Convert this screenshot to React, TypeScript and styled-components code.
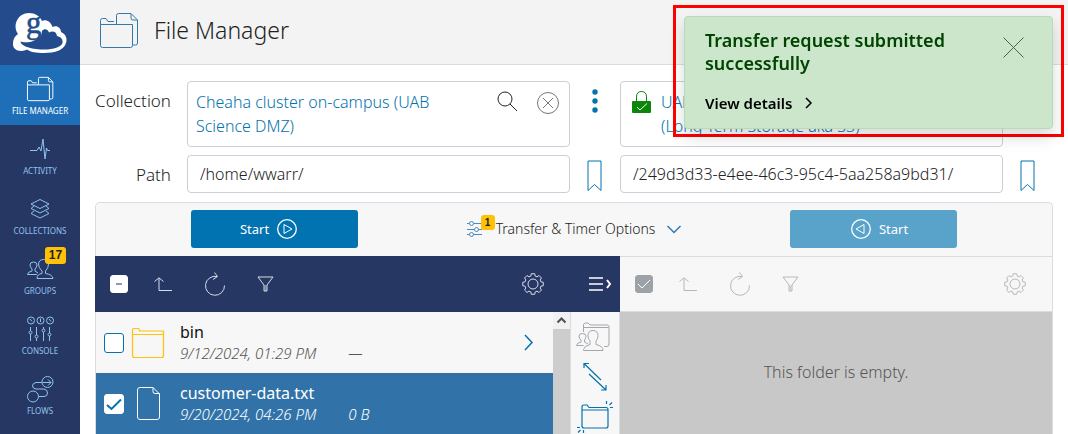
import React, { ReactNode } from "react";
import styled, { createGlobalStyle, css } from "styled-components";

const color = {
  navy: "#273763",
  link: "#0473ac",
  select: "#3173a9",
  line: "#d8dde3",
  field: "#cacfd8",
  panel: "#f7f7f7",
  amber: "#ffc107",
  muted: "#b4b8bc",
};

const GlobalStyle = createGlobalStyle`
  * { box-sizing: border-box; }
  body { margin: 0; background: #fff; color: #222; font: 300 16px/24px "Noto Sans", sans-serif; }
  button, input { font: inherit; color: inherit; }
  button { border: 0; background: none; padding: 0; cursor: pointer; }
  svg { display: block; flex: none; overflow: visible; }
  h1, h2, p, ul { margin: 0; padding: 0; }
  ul { list-style: none; }
  a { text-decoration: none; }
`;

/* ---------- icons ---------- */

type IconProps = { w: number; h: number; children: ReactNode; weight?: number };
const Icon = ({ w, h, children, weight = 1 }: IconProps) => (
  <svg width={w} height={h} viewBox={`0 0 ${w} ${h}`} fill="none" stroke="currentColor" strokeWidth={weight} aria-hidden="true">
    {children}
  </svg>
);

const Logo = () => (
  <svg width="56" height="42" viewBox="12 11 56 42" aria-hidden="true">
    <path fill="#fff" d="M13 42C13 38 15 35 18 33C12 24 18 12 29 12C35 12 40 15 42 20C46 18 51 21 52.500 26C57 24 61 27 61 31C66 33 67.500 38 66 42C64 49 55 52 44 52C36 52 30 51 27 48.500C20 52 12 49 13 42Z" />
    <path fill="#244c8c" d="M20.500 40.500C24 42 32 41.500 36 38.500C40 37 42 34 42 30C44 27 48 28 49 31.500C52 29.500 56.500 30 57 35C61 36 63 38 62.500 42C61 46 54 48.500 44 48.500C34 48.500 21 46 20.500 40.500Z" />
    <text x="26" y="32" fontFamily="Liberation Serif, serif" fontWeight="400" fontSize="31" fill="#244c8c" stroke="#244c8c" strokeWidth=".6">g</text>
  </svg>
);

const Folders = ({ large }: { large?: boolean }) => (
  <svg width={large ? 39 : 27} height={large ? 35 : 24} viewBox="0 0 39 35" fill="none" stroke="currentColor" strokeWidth={large ? 1 : 1.4} aria-hidden="true">
    <path d="M.5 11.500V7.500Q.5 5.500 2.500 5.500H6L8 8.500H14M.5 11.500H32.500V32.500Q32.500 34.500 30.500 34.500H2.500Q.5 34.500.5 32.500ZM16.500 11V2.500Q16.500.5 18.500.5H31L37.500 7V30Q37.500 32 35.500 32H33M31 1V5Q31 7 33 7H37" />
  </svg>
);

const Pulse = () => (
  <Icon w={20} h={22}><path d="M0 12.500H7L9 9L11 13L13 1L15 21L16.500 10L17.500 12.500H20" /></Icon>
);
const Layers = () => (
  <Icon w={20} h={22}>
    <path d="M1 6L10 1.500L19 6L10 10.500ZM4 8L1 10.500L10 15L19 10.500L16 8M4 13L1 15.500L10 20L19 15.500L16 13" />
  </Icon>
);
const People = () => (
  <Icon w={27} h={20}>
    <path d="M10 19.500Q10 15 15 14.500V12Q11.500 9 11.500 5Q12 .5 16.500 .5Q21 .5 21.500 5Q21.500 9 18.500 12V14.500Q25.500 15.500 26 19.500ZM10 15.500H.5Q.5 13 5 12V10Q3 8 3 6Q3 3 6.500 3Q10 3 10 6Q10 8 8 10V12L11 14" />
  </Icon>
);
const Console = () => (
  <Icon w={27} h={26}>
    <circle cx="4" cy="4.500" r="3.500" /><circle cx="13.500" cy="4.500" r="3.500" /><circle cx="23" cy="4.500" r="3.500" />
    <path d="M3 3L5 5.500M13.500 2.500V6M22 3L24 5.500M3.500 11V15M3.500 18V25M9.500 11V19M9.500 22V25M16.500 11V13M16.500 16V25M22.500 11V17M22.500 20V25" />
    <circle cx="3.500" cy="16.500" r="1.500" /><circle cx="9.500" cy="20.500" r="1.500" /><circle cx="16.500" cy="14.500" r="1.500" /><circle cx="22.500" cy="18.500" r="1.500" />
  </Icon>
);
const Flow = () => (
  <Icon w={27} h={27}>
    <circle cx="20.500" cy="6" r="5.500" /><circle cx="6" cy="20.500" r="5.500" />
    <path d="M15 6.500H9Q5.500 7 5.500 10Q5.500 12.500 9 13H17Q20.500 13.500 20.500 17Q20.500 20.500 17 20.500H11.500M16 6.500H24M21 3.500L24 6.500L21 9.500" />
  </Icon>
);
const Magnifier = () => (
  <Icon w={21} h={21}><circle cx="8" cy="8" r="7" /><path d="M13 13L20 20" /></Icon>
);
const CircledX = () => (
  <Icon w={22} h={22}><circle cx="11" cy="11" r="10.500" /><path d="M6 6L16 16M16 6L6 16" /></Icon>
);
const Kebab = () => (
  <svg width="6" height="24" viewBox="0 0 6 24" fill="currentColor" aria-hidden="true">
    <circle cx="3" cy="3" r="2.700" /><circle cx="3" cy="12" r="2.700" /><circle cx="3" cy="21" r="2.700" />
  </svg>
);
const Lock = () => (
  <svg width="19" height="22" viewBox="0 0 19 22" fill="none" aria-hidden="true">
    <path d="M4.500 11V6Q4.500.5 9.500.5Q14.500.5 14.500 6V11" stroke="#0a860a" />
    <rect y="10" width="19" height="12" rx="1" fill="#0a860a" />
    <path d="M5 16L8 19L15 12.500" stroke="#fff" />
  </svg>
);
const Bookmark = () => (
  <Icon w={15} h={32}><path d="M1 1H14V30.500L7.500 24.500L1 30.500Z" /></Icon>
);
const Sliders = () => (
  <Icon w={15} h={16}>
    <path d="M0 2.500H2.500M6.500 2.500H15M0 8.500H7.500M11.500 8.500H15M0 13.500H2.500M6.500 13.500H15" />
    <circle cx="4.500" cy="2.500" r="2" /><circle cx="9.500" cy="8.500" r="2" /><circle cx="4.500" cy="13.500" r="2" />
  </Icon>
);
const Play = ({ back }: { back?: boolean }) => (
  <Icon w={20} h={20}>
    <circle cx="10" cy="10" r="9.300" strokeWidth="1.300" />
    <path d={back ? "M13 5.500V14.500L5 10Z" : "M7 5.500V14.500L15 10Z"} />
  </Icon>
);
const UpLevel = () => (
  <Icon w={18} h={15}><path d="M.5 4.500L5 .8L9.500 4.500M5 1V13.500H18" /></Icon>
);
const Reload = () => (
  <Icon w={20} h={24}><path d="M19.500 13.500A9.500 9.500 0 1 1 12 4.500M9.500 .5L12.500 4.500L8 7.500" /></Icon>
);
const Funnel = () => (
  <Icon w={17} h={16}>
    <path d="M1 1H16L10 9V15H7V9Z" /><path d="M7.500 9H9.500V15H7.500Z" fill="currentColor" strokeWidth="0" opacity=".5" />
  </Icon>
);
const gearPath = (() => {
  const pts: string[] = [];
  for (let i = 0; i < 8; i++) {
    const a = (i * Math.PI) / 4;
    [[-0.27, 8.2], [-0.17, 10.4], [0.17, 10.4], [0.27, 8.2]].forEach(([d, r]) =>
      pts.push(`${(11 + r * Math.sin(a + d)).toFixed(2)} ${(11 - r * Math.cos(a + d)).toFixed(2)}`)
    );
  }
  return `M${pts.join("L")}Z`;
})();
const Gear = () => (
  <Icon w={22} h={22}><path d={gearPath} strokeLinejoin="round" /><circle cx="11" cy="11" r="5" /></Icon>
);
const PaneMenu = () => (
  <Icon w={23} h={16} weight={2}>
    <path d="M0 2H14M0 8H14M0 14H14" strokeWidth="1.500" /><path d="M18 4L21 8L18 12" />
  </Icon>
);
const Folder = () => (
  <Icon w={32} h={30}>
    <path d="M.5 27.500V2.500Q.5.500 2.500.500H6Q7.500.500 7.500 3H31.500V27.500Q31.500 29.500 29.500 29.500H2.500Q.5 29.500.5 27.500ZM1 6.500H31" strokeWidth="1.200" />
  </Icon>
);
const Page = () => (
  <Icon w={23} h={33}>
    <path d="M3 .5H16L22.500 7V30Q22.500 32.500 20 32.500H3Q.5 32.500.5 30V3Q.5.5 3 .5ZM16 .5V4.500Q16 6.500 18 6.500H22.500" />
  </Icon>
);
const Chevron = () => <Icon w={9} h={17} weight={1.5}><path d="M1 1L8 8.500L1 16" /></Icon>;
const SharedFolder = () => (
  <Icon w={38} h={31}>
    <path d="M7.500 10V3Q7.500 1 9.500 1H12L14 3H31Q33 3 33 5V22Q33 24.500 31 24.500H28M8 5.500H32.500M7.500 27.500Q8 24 14 22.500V19Q12 17 12 13.500Q12 8.500 17 8.500Q22 8.500 22 13.500Q22 17 20 19V22.500Q27 24 27 28.500H7.500ZM7.500 23.500H.5Q.5 21 5 20V18Q3 16.500 3 14Q3 11.500 6.500 11.500Q10 11.500 10 14Q10 16.500 8.500 18V20L12 22" />
  </Icon>
);
const Sync = () => (
  <Icon w={38} h={30} weight={1.2}>
    <path d="M8 1.500L25 18M8 6V1.500H13M13 12L30 28M25 28H30V23" />
  </Icon>
);
const NewFolder = () => (
  <Icon w={36} h={32} weight={1.2}>
    <path d="M5 26V6Q5 4 7 4H10L12 6.500H29Q31 6.500 31 8.500V25Q31 27 29 27H7Q5 27 5 25M5 9H31M29.500 0V3M32.500 4L35 1.500M33 6.500H36M0 26.500H3M1 31.500L3.500 29M6.500 29V32" />
  </Icon>
);

/* ---------- shell ---------- */

const Shell = styled.div`
  display: flex;
  height: 100vh;
  overflow: hidden;
`;
const Sidebar = styled.nav`
  flex: none;
  width: 80px;
  background: ${color.navy};
`;
const Brand = styled.a`
  display: flex;
  align-items: center;
  justify-content: center;
  height: 65px;
  background: #244c8c;
`;
const NavItem = styled.a<{ $active?: boolean }>`
  position: relative;
  display: flex;
  flex-direction: column;
  align-items: center;
  justify-content: space-between;
  height: 60px;
  padding: 8px 0;
  color: ${(p) => (p.$active ? "#fff" : "#8fc3ee")};
  background: ${(p) => (p.$active ? "#1f6fb8" : "transparent")};
  font: 400 8px/12px "Noto Sans", sans-serif;
  text-transform: uppercase;
`;
const NavIcon = styled.span`
  display: flex;
  align-items: center;
  height: 32px;
`;
const Badge = styled.span<{ $small?: boolean }>`
  position: absolute;
  border-radius: 3px;
  background: ${color.amber};
  color: #222;
  font-family: "Liberation Sans", sans-serif;
  font-weight: 700;
  text-align: center;
  ${(p) =>
    p.$small
      ? css`top: -6px; left: 14px; width: 14px; font-size: 10px; line-height: 15px;`
      : css`top: 2px; left: 45px; width: 21px; font-size: 12px; line-height: 17px;`}
`;
const Main = styled.main`
  flex: 1;
  min-width: 0;
  display: flex;
  flex-direction: column;
`;
const Header = styled.header`
  display: flex;
  align-items: center;
  gap: 15px;
  height: 65px;
  flex: none;
  padding: 0 20px 4px;
  background: #f3f3f3;
  border-bottom: 1px solid ${color.line};
  color: #3178ab;
`;
const Title = styled.h1`
  color: #222;
  font-size: 23px;
  line-height: 32px;
  font-weight: 300;
`;

/* ---------- endpoint form ---------- */

const Form = styled.div`
  display: grid;
  grid-template-columns: 92px minmax(0, 1fr) 50px minmax(0, 1fr) 50px;
  gap: 8px 0;
  padding: 16px 15px 9px;
`;
const Label = styled.label`
  padding: 8px 16px 0 0;
  font-size: 17px;
  text-align: right;
`;
const Field = styled.div`
  display: flex;
  align-items: flex-start;
  gap: 10px;
  height: 66px;
  padding: 8px 10px 8px 8px;
  border: 1px solid ${color.field};
  border-radius: 4px;
  background: #fff;
`;
const Collection = styled.button`
  flex: 1;
  text-align: left;
  color: ${color.link};
`;
const FieldButton = styled.button<{ $grey?: boolean }>`
  flex: none;
  padding-top: ${(p) => (p.$grey ? 2 : 1)}px;
  margin-left: ${(p) => (p.$grey ? 9 : 0)}px;
  color: ${(p) => (p.$grey ? "#777" : "#222")};
`;
const LockMark = styled.span`
  padding: 1px 0 0 3px;
`;
const PathInput = styled.input`
  width: 100%;
  min-width: 0;
  height: 38px;
  padding: 0 12px;
  border: 1px solid ${color.field};
  border-radius: 4px;
  background: #fff;
`;
const SideButton = styled.button`
  display: flex;
  justify-content: center;
  padding-top: 8px;
  color: ${color.link};
`;
const BookmarkButton = styled(SideButton)`
  padding: 5px 1px 0 0;
`;

/* ---------- transfer panel ---------- */

const Panel = styled.section`
  flex: 1;
  display: flex;
  flex-direction: column;
  margin: 0 15px;
  border: 1px solid ${color.line};
  border-bottom: 0;
  border-radius: 5px 5px 0 0;
  background: ${color.panel};
`;
const StartBar = styled.div`
  display: flex;
  align-items: center;
  justify-content: space-between;
  height: 53px;
  flex: none;
  padding: 0 95px 1px;
`;
const StartButton = styled.button<{ $dim?: boolean }>`
  display: flex;
  align-items: center;
  justify-content: center;
  gap: 8px;
  width: 167px;
  height: 38px;
  padding: ${(p) => (p.$dim ? "0 0 0 12px" : "0 12px 0 0")};
  border-radius: 3px;
  color: #fff;
  background: ${(p) => (p.$dim ? "#59a2ca" : "#0273b1")};
  font-size: 13px;
  font-weight: 400;
`;
const Options = styled.button`
  display: flex;
  align-items: center;
  gap: 12px;
  font-size: 14px;
  color: #222;
`;
const OptionsIcon = styled.span`
  position: relative;
  margin-right: 2px;
  color: #4c8bc0;
`;
const OptionsChevron = styled.span`
  color: #2f78b4;
`;
const Panes = styled.div`
  flex: 1;
  display: grid;
  grid-template-columns: 91px minmax(0, 1fr) 50px minmax(0, 1fr) 49px;
  grid-template-rows: 56px 1fr;
`;
const Toolbar = styled.div<{ $dark?: boolean }>`
  grid-column: span 2;
  display: flex;
  align-items: center;
  padding: 0 26px 0 15px;
  ${(p) =>
    p.$dark
      ? css`background: ${color.navy}; color: #d6dcea; margin-left: -1px;`
      : css`color: ${color.muted}; border: solid ${color.line}; border-width: 1px 0;`}
`;
const ToolButtons = styled.div`
  flex: 1;
  display: flex;
  align-items: center;
  margin-left: 12px;
`;
const Tool = styled.button`
  display: flex;
  justify-content: center;
  width: 50px;
  &:first-child { padding-right: 4px; }
`;
const MenuButton = styled.button`
  display: flex;
  align-items: center;
  justify-content: center;
  padding-left: 10px;
  background: ${color.navy};
  color: #fff;
`;
const CheckBox = styled.span<{ $size: number }>`
  position: relative;
  flex: none;
  width: ${(p) => p.$size}px;
  height: ${(p) => p.$size}px;
  & > svg { position: absolute; inset: 0; pointer-events: none; }
`;
const Tick = styled.input<{ $fill: string; $edge: string }>`
  appearance: none;
  display: block;
  width: 100%;
  height: 100%;
  margin: 0;
  border: 1px solid ${(p) => p.$edge};
  border-radius: 3px;
  background: ${(p) => p.$fill};
`;
const Listing = styled.div`
  grid-column: span 2;
  display: flex;
`;
const Files = styled.ul`
  flex: 1;
`;
const FileRow = styled.li<{ $selected?: boolean }>`
  display: flex;
  align-items: center;
  height: 61px;
  padding: 0 20px 0 8px;
  color: ${(p) => (p.$selected ? "#fff" : "#555")};
  background: ${(p) => (p.$selected ? color.select : "transparent")};
`;
const FileIcon = styled.span<{ $folder?: boolean }>`
  display: flex;
  justify-content: center;
  width: 48px;
  color: ${(p) => (p.$folder ? color.amber : "#fff")};
`;
const FileText = styled.div`
  flex: 1;
  padding-left: 8px;
`;
const FileName = styled.p<{ $selected?: boolean }>`
  color: ${(p) => (p.$selected ? "#fff" : "#111")};
  font-size: 16px;
  line-height: 20px;
  font-weight: 400;
`;
const FileMeta = styled.p`
  display: flex;
  gap: 32px;
  font-size: 15px;
  line-height: 22px;
  font-style: italic;
  font-weight: 300;
`;
const OpenButton = styled.button`
  color: ${color.link};
`;
const ScrollTrack = styled.div`
  width: 17px;
  background: #cdcdcd;
`;
const ScrollUp = styled.div`
  display: flex;
  align-items: center;
  justify-content: center;
  height: 17px;
  background: #f1f1f1;
  color: #505050;
`;
const Actions = styled.div`
  display: flex;
  flex-direction: column;
  align-items: center;
  gap: 9px;
  padding-top: 10px;
  border: solid ${color.line};
  border-width: 0 1px;
  color: ${color.link};
`;
const Action = styled.button`
  &:disabled { color: #a3a8ad; }
`;
const Empty = styled.div`
  grid-column: span 2;
  padding-top: 48px;
  background: #c8c8c8;
  color: #555;
  text-align: center;
`;

/* ---------- toast ---------- */

const Frame = styled.div`
  position: fixed;
  top: 5px;
  right: 4px;
  width: 391px;
  padding: 8px 8px 5px;
  border: 3px solid #f00;
`;
const Toast = styled.div`
  display: flex;
  align-items: flex-start;
  justify-content: space-between;
  min-height: 113px;
  padding: 12px 28px 12px 20px;
  border: 1px solid #b5dcb5;
  border-radius: 4px;
  background: #cce6cc;
  box-shadow: 0 8px 16px rgba(0, 0, 0, 0.15);
`;
const ToastTitle = styled.h2`
  color: #004400;
  font-size: 18px;
  line-height: 23px;
  font-weight: 600;
`;
const ToastLink = styled.a`
  display: flex;
  align-items: center;
  gap: 13px;
  margin-top: 17px;
  color: #000;
  font-size: 15px;
  line-height: 22px;
  font-weight: 600;
`;
const Dismiss = styled.button`
  padding-top: 8px;
  color: #4c5f4c;
`;

const nav: { name: string; icon: ReactNode; count?: number }[] = [
  { name: "File Manager", icon: <Folders /> },
  { name: "Activity", icon: <Pulse /> },
  { name: "Collections", icon: <Layers /> },
  { name: "Groups", icon: <People />, count: 17 },
  { name: "Console", icon: <Console /> },
  { name: "Flows", icon: <Flow /> },
];

const Tools = () => (
  <ToolButtons>
    <Tool aria-label="Up one folder"><UpLevel /></Tool>
    <Tool aria-label="Refresh"><Reload /></Tool>
    <Tool aria-label="Filter"><Funnel /></Tool>
  </ToolButtons>
);

export default function App() {
  return (
    <Shell>
      <GlobalStyle />
      <Sidebar>
        <Brand href="#" aria-label="Globus"><Logo /></Brand>
        {nav.map((n, i) => (
          <NavItem key={n.name} href="#" $active={i === 0}>
            <NavIcon>{n.icon}</NavIcon>
            {n.name}
            {n.count && <Badge>{n.count}</Badge>}
          </NavItem>
        ))}
      </Sidebar>
      <Main>
        <Header>
          <Folders large />
          <Title>File Manager</Title>
        </Header>
        <Form>
          <Label htmlFor="collection">Collection</Label>
          <Field>
            <Collection id="collection">Cheaha cluster on-campus (UAB Science DMZ)</Collection>
            <FieldButton aria-label="Search"><Magnifier /></FieldButton>
            <FieldButton $grey aria-label="Clear"><CircledX /></FieldButton>
          </Field>
          <SideButton aria-label="Collection menu"><Kebab /></SideButton>
          <Field>
            <LockMark><Lock /></LockMark>
            <Collection aria-label="Second collection">UAB Research<br />(Long Term Storage aka S3)</Collection>
          </Field>
          <span />
          <Label htmlFor="path">Path</Label>
          <PathInput id="path" defaultValue="/home/wwarr/" />
          <BookmarkButton aria-label="Bookmarks"><Bookmark /></BookmarkButton>
          <PathInput aria-label="Second path" defaultValue="/249d3d33-e4ee-46c3-95c4-5aa258a9bd31/" />
          <BookmarkButton aria-label="Bookmarks"><Bookmark /></BookmarkButton>
        </Form>
        <Panel>
          <StartBar>
            <StartButton>Start <Play /></StartButton>
            <Options>
              <OptionsIcon><Sliders /><Badge $small>1</Badge></OptionsIcon>
              Transfer &amp; Timer Options
              <OptionsChevron><Icon w={14} h={9} weight={1.5}><path d="M.5 1L7 7.500L13.500 1" /></Icon></OptionsChevron>
            </Options>
            <StartButton $dim><Play back /> Start</StartButton>
          </StartBar>
          <Panes>
            <Toolbar $dark>
              <CheckBox $size={18}>
                <Tick type="checkbox" aria-label="Select all" $fill="#fff" $edge="#fff" />
                <Icon w={18} h={18} weight={2}><path d="M6 9H12" stroke="#8d98b5" /></Icon>
              </CheckBox>
              <Tools />
              <button aria-label="Settings"><Gear /></button>
            </Toolbar>
            <MenuButton aria-label="Pane menu"><PaneMenu /></MenuButton>
            <Toolbar>
              <CheckBox $size={18}>
                <Tick type="checkbox" aria-label="Select all in second pane" defaultChecked $fill="#9da2a8" $edge="#9da2a8" />
                <Icon w={18} h={18}><path d="M3 9L7 13L15 5" stroke="#fff" /></Icon>
              </CheckBox>
              <Tools />
              <button aria-label="Settings"><Gear /></button>
            </Toolbar>
            <Listing>
              <Files>
                <FileRow>
                  <CheckBox $size={20}>
                    <Tick type="checkbox" aria-label="Select bin" $fill="#fff" $edge={color.link} />
                  </CheckBox>
                  <FileIcon $folder><Folder /></FileIcon>
                  <FileText>
                    <FileName>bin</FileName>
                    <FileMeta><span>9/12/2024, 01:29 PM</span><span>—</span></FileMeta>
                  </FileText>
                  <OpenButton aria-label="Open bin"><Chevron /></OpenButton>
                </FileRow>
                <FileRow $selected>
                  <CheckBox $size={20}>
                    <Tick type="checkbox" aria-label="Select customer-data.txt" defaultChecked $fill="#fff" $edge="#fff" />
                    <Icon w={20} h={20} weight={2}><path d="M3 11L7.500 15L17 5.500" stroke={color.link} /></Icon>
                  </CheckBox>
                  <FileIcon><Page /></FileIcon>
                  <FileText>
                    <FileName $selected>customer-data.txt</FileName>
                    <FileMeta><span>9/20/2024, 04:26 PM</span><span>0 B</span></FileMeta>
                  </FileText>
                </FileRow>
              </Files>
              <ScrollTrack>
                <ScrollUp><Icon w={9} h={7} weight={2}><path d="M.5 5.500L4.500 1.500L8.500 5.500" /></Icon></ScrollUp>
              </ScrollTrack>
            </Listing>
            <Actions>
              <Action disabled aria-label="Share"><SharedFolder /></Action>
              <Action aria-label="Transfer or sync"><Sync /></Action>
              <Action aria-label="New folder"><NewFolder /></Action>
            </Actions>
            <Empty>This folder is empty.</Empty>
          </Panes>
        </Panel>
      </Main>
      <Frame>
        <Toast role="status">
          <div>
            <ToastTitle>Transfer request submitted<br />successfully</ToastTitle>
            <ToastLink href="#">View details <Icon w={7} h={12} weight={1.5}><path d="M1 1L6 6L1 11" /></Icon></ToastLink>
          </div>
          <Dismiss aria-label="Dismiss"><Icon w={21} h={21}><path d="M.5.5L20.500 20.500M20.500.5L.5 20.500" /></Icon></Dismiss>
        </Toast>
      </Frame>
    </Shell>
  );
}
